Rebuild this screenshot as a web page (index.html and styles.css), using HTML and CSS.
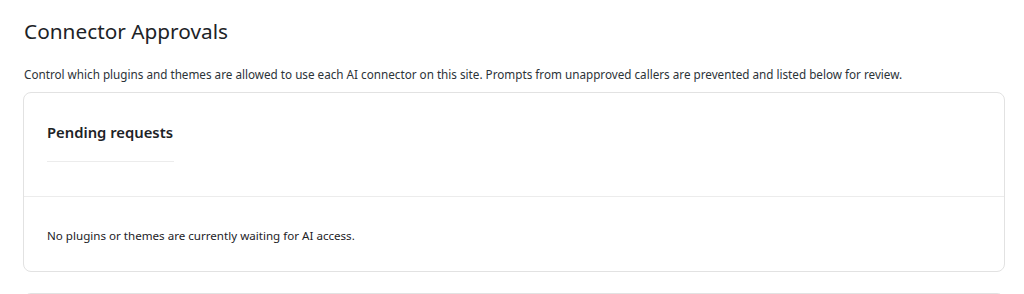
FILE: index.html
```html
<!DOCTYPE html>
<html lang="en">
<head>
<meta charset="utf-8">
<title>Connector Approvals</title>
<link rel="stylesheet" href="styles.css">
</head>
<body>
<div class="wrap">
  <h1 class="page-title">Connector Approvals</h1>
  <p class="intro">Control which plugins and themes are allowed to use each AI connector on this site. Prompts from unapproved callers are prevented and listed below for review.</p>
  <section class="card">
    <div class="card-header">
      <h2 class="card-title">Pending requests</h2>
    </div>
    <div class="card-body">
      <p class="empty">No plugins or themes are currently waiting for AI access.</p>
    </div>
  </section>
  <section class="card card-next"></section>
</div>
</body>
</html>
```

FILE: styles.css
```css
html, body {
  margin: 0;
  padding: 0;
  background: #ffffff;
}
body {
  font-family: "Noto Sans", "Open Sans", sans-serif;
  color: #1d2327;
  font-size: 13px;
}
.wrap {
  padding: 16px 19px 0 23px;
}
.page-title {
  margin: 0;
  padding: 0 0 0 1px;
  font-size: 20.8px;
  font-weight: 400;
  line-height: 30px;
  color: #1d2327;
}
.intro {
  margin: 18px 0 0 1px;
  font-size: 11.7px;
  line-height: 20px;
  color: #2c3338;
}
.card {
  margin-top: 8px;
  border: 1px solid #e2e2e2;
  border-radius: 8px;
  background: #fff;
}
.card-header {
  padding: 26px 23px 34px;
  border-bottom: 1px solid #ececec;
}
.card-title {
  display: inline-block;
  margin: 0;
  padding: 0 1px 16px 0;
  font-size: 14.8px;
  font-weight: 600;
  line-height: 26px;
  border-bottom: 1px solid #ececec;
  color: #1d2327;
}
.card-body {
  padding: 29px 23px 25px;
}
.empty {
  margin: 0;
  font-size: 11.6px;
  line-height: 20px;
  color: #1d2327;
}
.card-next {
  margin-top: 21px;
  height: 40px;
}
```
